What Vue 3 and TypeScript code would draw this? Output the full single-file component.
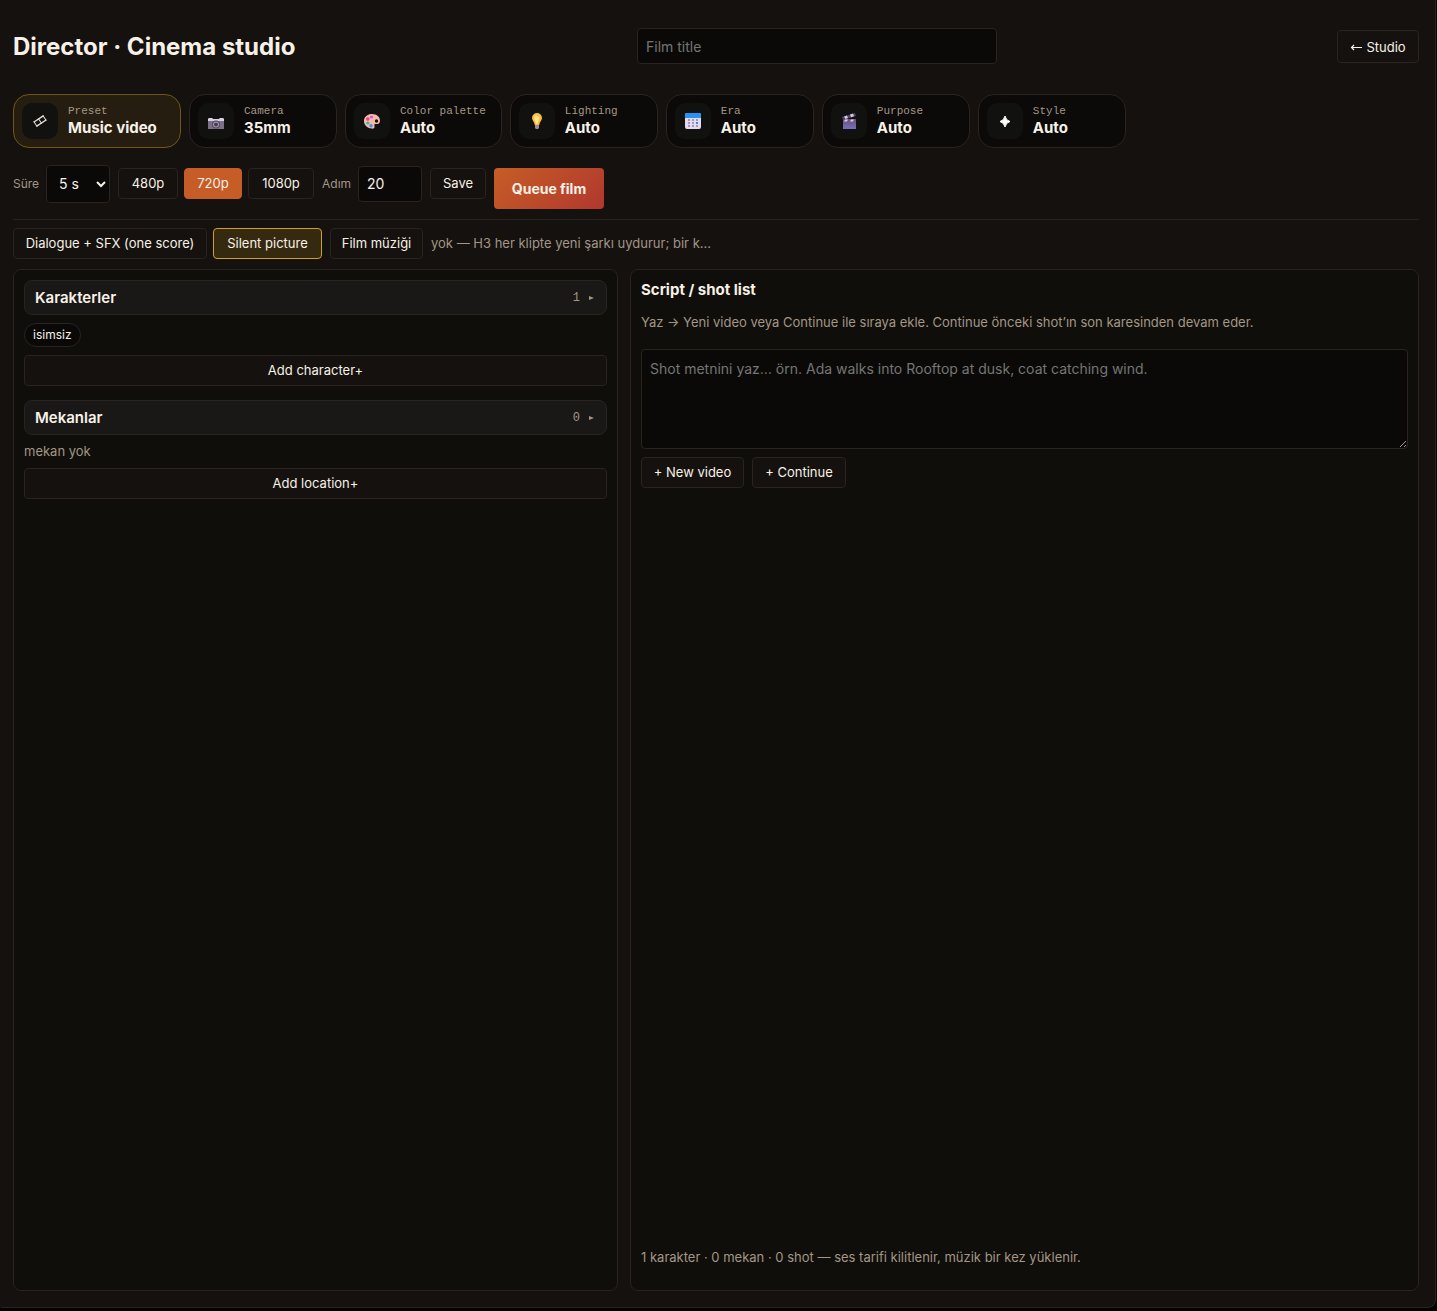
<script setup lang="ts">
import { computed, ref } from 'vue'

interface Setting {
  id: string
  label: string
  value: string
}

const settings: Setting[] = [
  { id: 'preset', label: 'Preset', value: 'Music video' },
  { id: 'camera', label: 'Camera', value: '35mm' },
  { id: 'palette', label: 'Color palette', value: 'Auto' },
  { id: 'lighting', label: 'Lighting', value: 'Auto' },
  { id: 'era', label: 'Era', value: 'Auto' },
  { id: 'purpose', label: 'Purpose', value: 'Auto' },
  { id: 'style', label: 'Style', value: 'Auto' },
]
const resolutions = ['480p', '720p', '1080p']

const title = ref('')
const active = ref('preset')
const duration = ref('5')
const resolution = ref('720p')
const steps = ref('20')
const silent = ref(true)
const script = ref('')
const characters = ref<string[]>(['isimsiz'])
const locations = ref<string[]>([])
const shots = ref<string[]>([])

const summary = computed(
  () =>
    `${characters.value.length} karakter · ${locations.value.length} mekan · ${shots.value.length} shot — ses tarifi kilitlenir, müzik bir kez yüklenir.`,
)

function addShot() {
  if (script.value.trim()) {
    shots.value.push(script.value.trim())
    script.value = ''
  }
}
</script>

<template>
  <main class="studio">
    <header class="top">
      <h1>Director · Cinema studio</h1>
      <input v-model="title" class="field film-title" type="text" placeholder="Film title" aria-label="Film title" />
      <a class="btn back" href="#studio">
        <svg width="12" height="10" viewBox="0 0 12 10" aria-hidden="true">
          <path d="M12 5.5H1.500M4 3L1.500 5.500L4 8" fill="none" stroke="currentColor" stroke-width="1.2" />
        </svg>
        Studio
      </a>
    </header>

    <nav class="settings" aria-label="Film settings">
      <button
        v-for="s in settings"
        :key="s.id"
        type="button"
        class="setting"
        :class="{ active: active === s.id }"
        @click="active = s.id"
      >
        <span class="tile">
          <svg v-if="s.id === 'preset'" width="16" height="16" viewBox="0 0 16 16" aria-hidden="true">
            <g fill="none" stroke="#e6e0d8" transform="rotate(-34 8 8)">
              <path d="M2 5.500H14M2 10.500H14" stroke-width="1.4" />
              <path d="M2.500 5V11M8 5V11M13.500 5V11" />
            </g>
          </svg>
          <svg v-else-if="s.id === 'camera'" width="16" height="16" viewBox="0 0 16 16" aria-hidden="true">
            <path d="M0 6L1 5H4L5 6H11L12 5H15L16 6V16H0Z" fill="#7d7086" />
            <path d="M0 6L1 5H4L5 6H11L12 5H15L16 6V8H0Z" fill="#d9d0df" />
            <circle cx="8" cy="11.500" r="4" fill="#54465f" />
            <circle cx="8" cy="11.500" r="3" fill="#a99ab5" />
            <circle cx="8" cy="11.500" r="2" fill="#493c54" />
          </svg>
          <svg v-else-if="s.id === 'palette'" width="16" height="16" viewBox="0 0 16 16" aria-hidden="true">
            <path
              d="M7 1C12 .5 16 3.500 16 7.500C16 10.500 14 11.500 12 11C10.500 10.700 10 11.500 10.500 13C11 15 9.500 16 7.500 15.500C3 15 0 12 0 8C0 4 3 1.500 7 1Z"
              fill="#f7b9a5"
            />
            <circle cx="12.500" cy="8" r="1.700" fill="#15110e" />
            <circle cx="7.500" cy="4" r="1.600" fill="#c45be0" />
            <circle cx="3.800" cy="6" r="1.700" fill="#ee3d7e" />
            <circle cx="3.800" cy="10" r="1.600" fill="#21b8b5" />
            <circle cx="7" cy="12.800" r="1.700" fill="#3597f0" />
          </svg>
          <svg v-else-if="s.id === 'lighting'" width="16" height="16" viewBox="0 0 16 16" aria-hidden="true">
            <path d="M8 0A5 5 0 0 0 3 5C3 7.500 5.500 9 5.800 12H10.200C10.500 9 13 7.500 13 5A5 5 0 0 0 8 0Z" fill="#fbbd3b" />
            <path d="M7 2A3 3 0 0 0 5 5C5 7 7 8 7 11H8.500C9 8 11 6 10 4Z" fill="#ffe38a" />
            <path d="M6 12H10V15L9 16H7L6 15Z" fill="#998aa9" />
          </svg>
          <svg v-else-if="s.id === 'era'" width="16" height="16" viewBox="0 0 16 16" aria-hidden="true">
            <rect width="16" height="16" rx="2" fill="#e5daf0" />
            <path d="M2 0H14A2 2 0 0 1 16 2V5H0V2A2 2 0 0 1 2 0Z" fill="#2792f2" />
            <g fill="#a596b5">
              <rect x="3" y="6" width="2" height="2" /><rect x="7" y="6" width="2" height="2" /><rect x="11" y="6" width="2" height="2" />
              <rect x="3" y="9" width="2" height="2" /><rect x="7" y="9" width="2" height="2" />
              <rect x="3" y="12" width="2" height="2" /><rect x="7" y="12" width="2" height="2" /><rect x="11" y="12" width="2" height="2" />
            </g>
            <rect x="11" y="9" width="2" height="2" fill="#2792f2" />
          </svg>
          <svg v-else-if="s.id === 'purpose'" width="16" height="16" viewBox="0 0 16 16" aria-hidden="true">
            <defs>
              <linearGradient id="slate" x1="0" y1="0" x2="0" y2="1">
                <stop offset="0" stop-color="#675074" />
                <stop offset="1" stop-color="#7770bd" />
              </linearGradient>
            </defs>
            <path d="M2 6H15V16H2Z" fill="url(#slate)" />
            <path d="M1 4L14 0L15 3L2 7Z" fill="#514060" />
            <path d="M3 3.400L6 2.500L7 5L4.500 6ZM9 1.500L12 .6L13 3.200L10 4.200ZM4 6.500H7L6 8.500H3ZM10 6.500H13L12 8.500H9Z" fill="#cfc8ee" />
          </svg>
          <svg v-else width="16" height="16" viewBox="0 0 16 16" aria-hidden="true">
            <path d="M8 3Q9 7.500 13 8.500Q9 9.500 8 14Q7 9.500 3 8.500Q7 7.500 8 3Z" fill="#fff" stroke="#fff" />
          </svg>
        </span>
        <span class="caption">
          <span class="key">{{ s.label }}</span>
          <strong class="value">{{ s.value }}</strong>
        </span>
      </button>
    </nav>

    <section class="controls" aria-label="Render options">
      <label class="labelled">
        <span>Süre</span>
        <select v-model="duration" class="field duration">
          <option value="5">5 s</option>
          <option value="10">10 s</option>
        </select>
      </label>
      <div class="group">
        <button
          v-for="r in resolutions"
          :key="r"
          type="button"
          class="btn"
          :class="[`res-${r}`, { chosen: resolution === r }]"
          @click="resolution = r"
        >
          {{ r }}
        </button>
      </div>
      <label class="labelled">
        <span class="steps-label">Adım</span>
        <input v-model="steps" class="field steps" type="text" inputmode="numeric" />
      </label>
      <button type="button" class="btn save">Save</button>
      <button type="button" class="queue">Queue film</button>
    </section>

    <section class="audio" aria-label="Audio">
      <div class="group">
        <button type="button" class="btn dialogue" :class="{ lit: !silent }" @click="silent = false">
          Dialogue + SFX (one score)
        </button>
        <button type="button" class="btn silent" :class="{ lit: silent }" @click="silent = true">Silent picture</button>
      </div>
      <button type="button" class="btn music">Film müziği</button>
      <span class="muted">yok — H3 her klipte yeni şarkı uydurur; bir k…</span>
    </section>

    <div class="columns">
      <section class="panel">
        <button type="button" class="fold">
          <strong>Karakterler</strong>
          <span class="count">{{ characters.length }} <i></i></span>
        </button>
        <div class="tags">
          <button v-for="c in characters" :key="c" type="button" class="tag">{{ c }}</button>
        </div>
        <button type="button" class="btn wide">Add character+</button>

        <button type="button" class="fold second">
          <strong>Mekanlar</strong>
          <span class="count">{{ locations.length }} <i></i></span>
        </button>
        <p class="muted none">mekan yok</p>
        <button type="button" class="btn wide">Add location+</button>
      </section>

      <section class="panel script">
        <h2>Script / shot list</h2>
        <p class="muted hint">
          Yaz → Yeni video veya Continue ile sıraya ekle. Continue önceki shot’ın son karesinden devam eder.
        </p>
        <textarea
          v-model="script"
          class="field shot-text"
          aria-label="Shot"
          placeholder="Shot metnini yaz… örn. Ada walks into Rooftop at dusk, coat catching wind."
        ></textarea>
        <div class="actions">
          <button type="button" class="btn new" @click="addShot">+ New video</button>
          <button type="button" class="btn continue" @click="addShot">+ Continue</button>
        </div>
        <p class="muted summary">{{ summary }}</p>
      </section>
    </div>
  </main>
</template>

<style>
html {
  background: #000;
  color-scheme: dark;
}
</style>

<style scoped>
.studio,
.studio * {
  box-sizing: border-box;
}

.studio {
  display: flex;
  flex-direction: column;
  min-height: calc(100vh - 3px);
  margin-right: 1px;
  padding: 28px 16px 16px 13px;
  border: solid #2a2320;
  border-width: 0 1px 1px 0;
  border-radius: 0 0 8px 2px;
  background: #15110e;
  color: #f7f1e8;
  font: 13px/18px Inter, "Liberation Sans", sans-serif;
}

h1,
h2,
p {
  margin: 0;
}

button,
input,
select,
textarea {
  margin: 0;
  color: inherit;
  font: inherit;
}

button {
  cursor: pointer;
}

.top {
  display: flex;
  align-items: center;
  justify-content: space-between;
  gap: 16px;
  height: 36px;
}

h1 {
  min-width: 284px;
  padding-top: 2px;
  font-size: 24px;
  line-height: 36px;
  font-weight: 700;
  white-space: nowrap;
}

.field {
  padding: 0 8px;
  border: 1px solid #2a2320;
  border-radius: 4px;
  background: #0a0907;
  font-size: 14px;
}

.field::placeholder {
  color: #757575;
}

.film-title {
  width: 360px;
  height: 36px;
}

.btn {
  height: 31px;
  padding: 0 0 2px;
  border: 1px solid #2a2320;
  border-radius: 4px;
  background: #15110e;
  text-align: center;
  white-space: nowrap;
}

.back {
  display: flex;
  align-items: center;
  justify-content: center;
  gap: 4px;
  width: 82px;
  height: 33px;
  padding: 2px 0 0;
  color: inherit;
  text-decoration: none;
}

.settings {
  display: flex;
  flex-wrap: wrap;
  gap: 8px;
  margin-top: 30px;
}

.setting {
  display: flex;
  align-items: center;
  gap: 10px;
  min-width: 148px;
  height: 54px;
  padding: 0 15px 0 8px;
  border: 1px solid #2a2320;
  border-radius: 16px;
  background: #0b0a08;
  text-align: left;
}

.setting.active {
  min-width: 168px;
  padding-right: 8px;
  border-color: #735616;
  background: #251d10;
}

.tile {
  display: grid;
  flex: none;
  place-items: center;
  width: 36px;
  height: 36px;
  border-radius: 10px;
  background: #111110;
}

.caption {
  display: flex;
  flex-direction: column;
  padding-bottom: 2px;
}

.key {
  color: #a39686;
  font: 11px/16px "Liberation Mono", monospace;
}

.value {
  font-size: 15px;
  line-height: 18px;
  font-weight: 700;
}

.controls,
.audio {
  display: flex;
  align-items: center;
  gap: 8px;
}

.controls {
  margin-top: 10px;
  padding-bottom: 10px;
  border-bottom: 1px solid #2a2320;
}

.group,
.labelled {
  display: flex;
  align-items: center;
  gap: 6px;
}

.labelled {
  color: #a39686;
  font-size: 12px;
}

.labelled span {
  min-width: 27px;
}

.labelled .steps-label {
  min-width: 30px;
}

.labelled .field {
  color: #f7f1e8;
}

.duration {
  width: 64px;
  height: 38px;
}

.steps {
  width: 64px;
  height: 36px;
}

.res-480p {
  width: 60px;
}

.res-720p {
  width: 58px;
}

.res-1080p {
  width: 66px;
}

.btn.chosen {
  border-color: #c65d26;
  background: #c65d26;
}

.save {
  width: 56px;
}

.queue {
  width: 110px;
  height: 41px;
  margin-top: 10px;
  padding: 0;
  border: 0;
  border-radius: 4px;
  background: linear-gradient(135deg, #c65d26, #b0382e);
  font-weight: 700;
  font-size: 14px;
}

.audio {
  margin-top: 8px;
}

.audio .muted {
  padding-bottom: 2px;
}

.dialogue {
  width: 194px;
}

.silent {
  width: 109px;
}

.btn.lit {
  border-color: #d4a020;
  background: #352910;
}

.music {
  width: 93px;
}

.muted {
  color: #a39686;
}

.columns {
  display: grid;
  flex: 1;
  grid-template-columns: 605fr 789fr;
  gap: 12px;
  margin-top: 10px;
}

.panel {
  display: flex;
  flex-direction: column;
  padding: 10px;
  border: 1px solid #2a2320;
  border-radius: 8px;
  background: #0f0e0a;
}

.fold {
  display: flex;
  align-items: center;
  justify-content: space-between;
  height: 35px;
  padding: 0 12px 0 10px;
  border: 1px solid #2a2320;
  border-radius: 8px;
  background: #191816;
}

.fold.second {
  margin-top: 14px;
}

.fold strong,
h2 {
  font-size: 15px;
  line-height: 20px;
  font-weight: 600;
}

.count {
  display: flex;
  align-items: center;
  gap: 9px;
  color: #a39686;
  font: 12px/18px "Liberation Mono", monospace;
}

.count i {
  border: solid transparent;
  border-width: 2px 0 2px 5px;
  border-left-color: #a39686;
}

.tags {
  display: flex;
  gap: 6px;
  margin: 8px 0;
}

.tag {
  height: 24px;
  padding: 0 8px;
  border: 1px solid #2a2320;
  border-radius: 12px;
  background: #0a0907;
  font-size: 12px;
  line-height: 16px;
}

.none {
  margin: 7px 0 8px;
}

.script h2 {
  font-weight: 700;
}

.hint {
  margin: 13px 0 18px;
}

.shot-text {
  height: 100px;
  padding: 10px 8px;
  resize: vertical;
}

.actions {
  display: flex;
  gap: 8px;
  margin-top: 8px;
}

.new {
  width: 103px;
}

.continue {
  width: 94px;
}

.summary {
  margin-top: auto;
  padding-bottom: 14px;
}
</style>
